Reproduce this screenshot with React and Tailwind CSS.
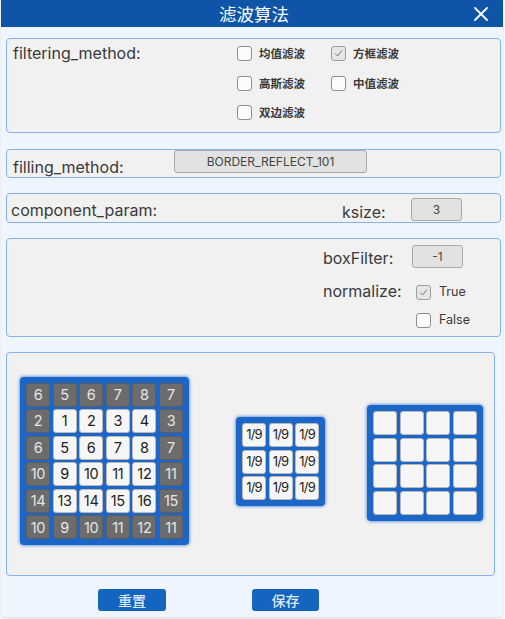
import React from "react";

const latin = { fontFamily: 'Inter, "Noto Sans CJK SC", sans-serif' };

function Check({ checked }) {
  return (
    <div
      className={`w-[15px] h-[15px] rounded-[3px] border flex items-center justify-center ${
        checked ? "bg-[#e6e6e6] border-[#9c9c9c]" : "bg-[#fbfbfb] border-[#8e8e8e]"
      }`}
    >
      {checked && (
        <svg width="11" height="11" viewBox="0 0 11 11">
          <path d="M2 5.5 L4.5 8 L9 2.5" fill="none" stroke="#7a7a7a" strokeWidth="1" />
        </svg>
      )}
    </div>
  );
}

function CheckItem({ label, checked, cls = "" }) {
  return (
    <div className={`flex items-center gap-[7px] ${cls}`}>
      <Check checked={checked} />
      <span className="text-[11.5px] font-semibold text-[#3a3a3a]" style={{ fontFamily: '"Noto Sans CJK SC", sans-serif' }}>
        {label}
      </span>
    </div>
  );
}

function Panel({ children, className = "" }) {
  return (
    <div className={`border border-[#86b2ec] rounded-[4px] bg-[#f1f1f1] ${className}`}>{children}</div>
  );
}

function Field({ value, w = "w-[51px]", h = "h-[23px]" }) {
  return (
    <div
      className={`${w} ${h} bg-[#e2e2e2] border border-[#a9a9a9] rounded-[3px] flex items-center justify-center text-[12px] text-[#444]`}
      style={latin}
    >
      {value}
    </div>
  );
}

function Cell({ v, dark, empty }) {
  return (
    <div
      className={`w-[24px] h-[24px] rounded-[3px] flex items-center justify-center text-[14.5px] tracking-[-0.3px] ${
        dark
          ? "bg-[#6c6c6c] border border-[#5c5c5c] text-[#e6e6e6]"
          : "bg-[#f6f6f6] border border-[#b9b9b9] text-[#222]"
      }`}
      style={latin}
    >
      {empty ? "" : v}
    </div>
  );
}

const g1 = [
  [6, 5, 6, 7, 8, 7],
  [2, 1, 2, 3, 4, 3],
  [6, 5, 6, 7, 8, 7],
  [10, 9, 10, 11, 12, 11],
  [14, 13, 14, 15, 16, 15],
  [10, 9, 10, 11, 12, 11],
];

function Box({ children, cols }) {
  return (
    <div
      className={`bg-[#1b66c6] rounded-[4px] p-[6px] grid gap-[2.6px] shadow-[0_0_3px_1px_rgba(40,110,210,0.6)] ${cols}`}
    >
      {children}
    </div>
  );
}

const lbl = "text-[16px] text-[#3a3a3a] leading-[20px]";

export default function App() {
  return (
    <div className="w-[505px] h-[619px] bg-white">
      <div className="ml-[1px] w-[502px] h-[617px] bg-[#eff5fe] flex flex-col shadow-[0_1px_3px_rgba(0,0,0,0.18)] rounded-b-[3px]">
        <div className="h-[27px] bg-[#0e55a7] flex items-center relative">
          <div
            className="flex-1 text-center text-white text-[17.5px] leading-[27px] pl-[4px]"
            style={{ fontFamily: '"Noto Sans CJK SC", sans-serif' }}
          >
            滤波算法
          </div>
          <svg className="absolute left-[473px] top-[7px]" width="14" height="14" viewBox="0 0 14 14">
            <path d="M1 1 L13 13 M13 1 L1 13" stroke="white" strokeWidth="1.8" strokeLinecap="round" />
          </svg>
        </div>

        <div className="pl-[5px] pr-[2px] pt-[11px] flex flex-col">
          {/* filtering method */}
          <Panel className="h-[95px] flex">
            <div className={`w-[230px] pl-[6px] pt-[4px] ${lbl}`} style={latin}>
              filtering_method:
            </div>
            <div className="pt-[7px] flex flex-col">
              <div className="flex h-[30px]">
                <CheckItem label="均值滤波" cls="w-[94px] h-[15px]" />
                <CheckItem label="方框滤波" checked cls="h-[15px]" />
              </div>
              <div className="flex h-[29px]">
                <CheckItem label="高斯滤波" cls="w-[94px] h-[15px]" />
                <CheckItem label="中值滤波" cls="h-[15px]" />
              </div>
              <div className="flex">
                <CheckItem label="双边滤波" cls="h-[15px]" />
              </div>
            </div>
          </Panel>

          {/* filling method */}
          <Panel className="h-[29px] mt-[16px] flex items-start">
            <div className={`w-[167px] pl-[6px] pt-[7px] ${lbl}`} style={latin}>
              filling_method:
            </div>
            <div className="w-[193px] h-[23px] bg-[#e2e2e2] border border-[#a9a9a9] rounded-[3px] flex items-center justify-center text-[12px] text-[#444]" style={latin}>
              BORDER_REFLECT_101
            </div>
          </Panel>

          {/* component param */}
          <Panel className="h-[30px] mt-[15px] flex items-start">
            <div className={`w-[335px] pl-[4px] pt-[6px] ${lbl}`} style={latin}>
              component_param:
            </div>
            <div className={`w-[69px] pt-[8px] ${lbl}`} style={latin}>
              ksize:
            </div>
            <div className="pt-[4px]">
              <Field value="3" />
            </div>
          </Panel>

          {/* params */}
          <Panel className="h-[99px] mt-[15px] flex flex-col pl-[316px] pt-[6px]">
            <div className="flex items-center">
              <div className={`w-[89px] pt-[3px] ${lbl}`} style={latin}>
                boxFilter:
              </div>
              <Field value="-1" />
            </div>
            <div className="flex mt-[13px]">
              <div className={`w-[93px] ${lbl}`} style={latin}>
                normalize:
              </div>
              <div className="flex flex-col gap-[9px] pt-[2px]">
                <div className="flex items-center gap-[8px]">
                  <Check checked />
                  <span className="text-[12.5px] text-[#3a3a3a]" style={latin}>True</span>
                </div>
                <div className="flex items-center gap-[8px]">
                  <Check />
                  <span className="text-[12.5px] text-[#3a3a3a]" style={latin}>False</span>
                </div>
              </div>
            </div>
          </Panel>

          {/* grids */}
          <Panel className="h-[224px] w-[489px] mt-[15px] flex items-center pl-[13px] pb-[6px]">
            <Box cols="grid-cols-[repeat(6,24px)]">
              {g1.map((row, r) =>
                row.map((v, c) => (
                  <Cell key={`${r}-${c}`} v={v} dark={r === 0 || r === 5 || c === 0 || c === 5} />
                ))
              )}
            </Box>
            <div className="ml-[47px] mt-[1px]">
              <Box cols="grid-cols-[repeat(3,24px)]">
                {Array.from({ length: 9 }).map((_, i) => (
                  <div
                    key={i}
                    className="w-[24px] h-[24px] rounded-[3px] bg-[#f6f6f6] border border-[#b9b9b9] flex items-center justify-center text-[13px] text-[#222] tracking-[-0.8px]"
                    style={latin}
                  >
                    1/9
                  </div>
                ))}
              </Box>
            </div>
            <div className="ml-[42px] mt-[4px]">
              <Box cols="grid-cols-[repeat(4,24px)]">
                {Array.from({ length: 16 }).map((_, i) => (
                  <Cell key={i} empty />
                ))}
              </Box>
            </div>
          </Panel>

          {/* buttons */}
          <div className="flex mt-[13px]">
            <button
              className="ml-[92px] w-[68px] h-[22px] bg-[#1565c0] rounded-[3px] text-[14px] text-[#dfe9f7] font-medium flex items-center justify-center"
              style={{ fontFamily: '"Noto Sans CJK SC", sans-serif' }}
            >
              重置
            </button>
            <button
              className="ml-[86px] w-[67px] h-[22px] bg-[#1565c0] rounded-[3px] text-[14px] text-[#dfe9f7] font-medium flex items-center justify-center"
              style={{ fontFamily: '"Noto Sans CJK SC", sans-serif' }}
            >
              保存
            </button>
          </div>
        </div>
      </div>
    </div>
  );
}
